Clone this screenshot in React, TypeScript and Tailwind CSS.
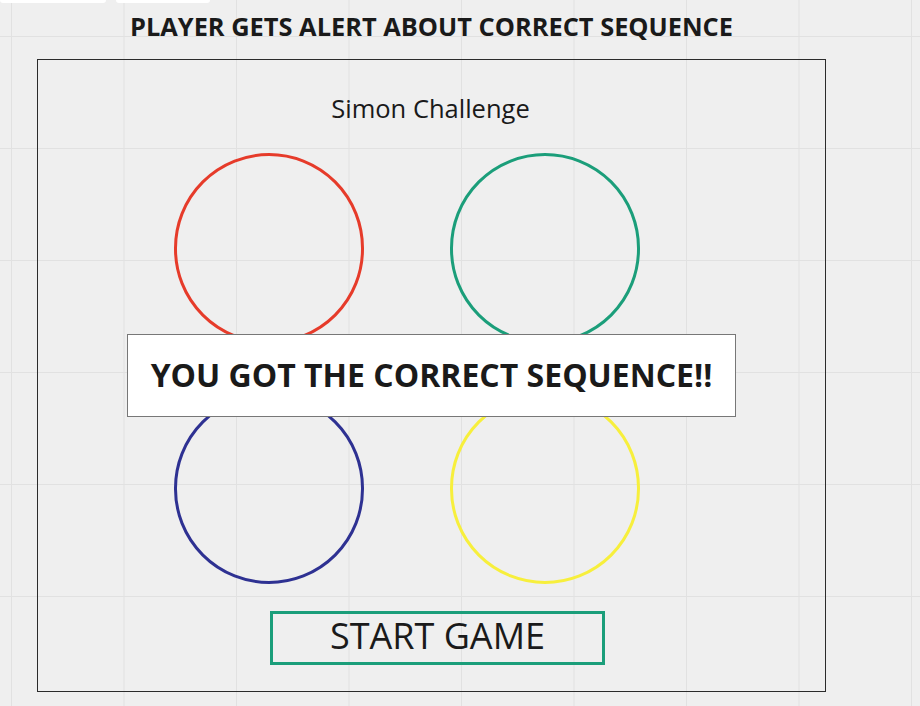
import React from 'react';

const circles = [
  { id: 'red', border: 'border-[#e63b2a]' },
  { id: 'green', border: 'border-[#1b9e7a]' },
  { id: 'blue', border: 'border-[#2e3192]' },
  { id: 'yellow', border: 'border-[#f7ef3c]' },
];

export default function App() {
  return (
    <div className="relative w-[920px] h-[706px] overflow-hidden bg-[#efefef] bg-[linear-gradient(to_right,#e1e1e1_1px,transparent_1px),linear-gradient(to_bottom,#e1e1e1_1px,transparent_1px)] bg-[size:112.5px_112px] bg-[position:11px_36px] font-['Open_Sans',sans-serif] text-[#1a1a1a]">
      {/* board tabs */}
      <div className="absolute top-0 left-0 flex gap-[10px]">
        <div className="w-[106px] h-[3px] bg-white rounded-b" />
        <div className="w-[94px] h-[3px] bg-white rounded-b" />
      </div>

      <h1 className="h-[59px] pt-[8px] pl-[130px] text-[25.4px] leading-[36px] font-bold">
        PLAYER GETS ALERT ABOUT CORRECT SEQUENCE
      </h1>

      <div className="relative ml-[37px] w-[789px] h-[633px] border border-[#2b2b2b]">
        <p className="mt-[31px] h-[34px] text-center pr-[2px] text-[25.5px] leading-[34px]">
          Simon Challenge
        </p>

        <div className="mt-[28px] ml-[136px] grid grid-cols-[190px_190px] gap-x-[86px] gap-y-[49px]">
          {circles.map((c) => (
            <div
              key={c.id}
              className={`w-[190px] h-[191px] rounded-full border-[3px] ${c.border}`}
            />
          ))}
        </div>

        <button className="mt-[27px] ml-[232px] w-[335px] h-[54px] border-[3px] border-[#1b9e7a] flex items-center justify-center text-[36px] leading-none pb-[4px]">
          START GAME
        </button>

        {/* alert overlay */}
        <div className="absolute left-[89px] top-[274px] w-[609px] h-[83px] bg-white border border-[#777777] flex items-center justify-center">
          <span className="text-[32px] font-bold leading-none pb-[1px]">
            YOU GOT THE CORRECT SEQUENCE!!
          </span>
        </div>
      </div>
    </div>
  );
}
